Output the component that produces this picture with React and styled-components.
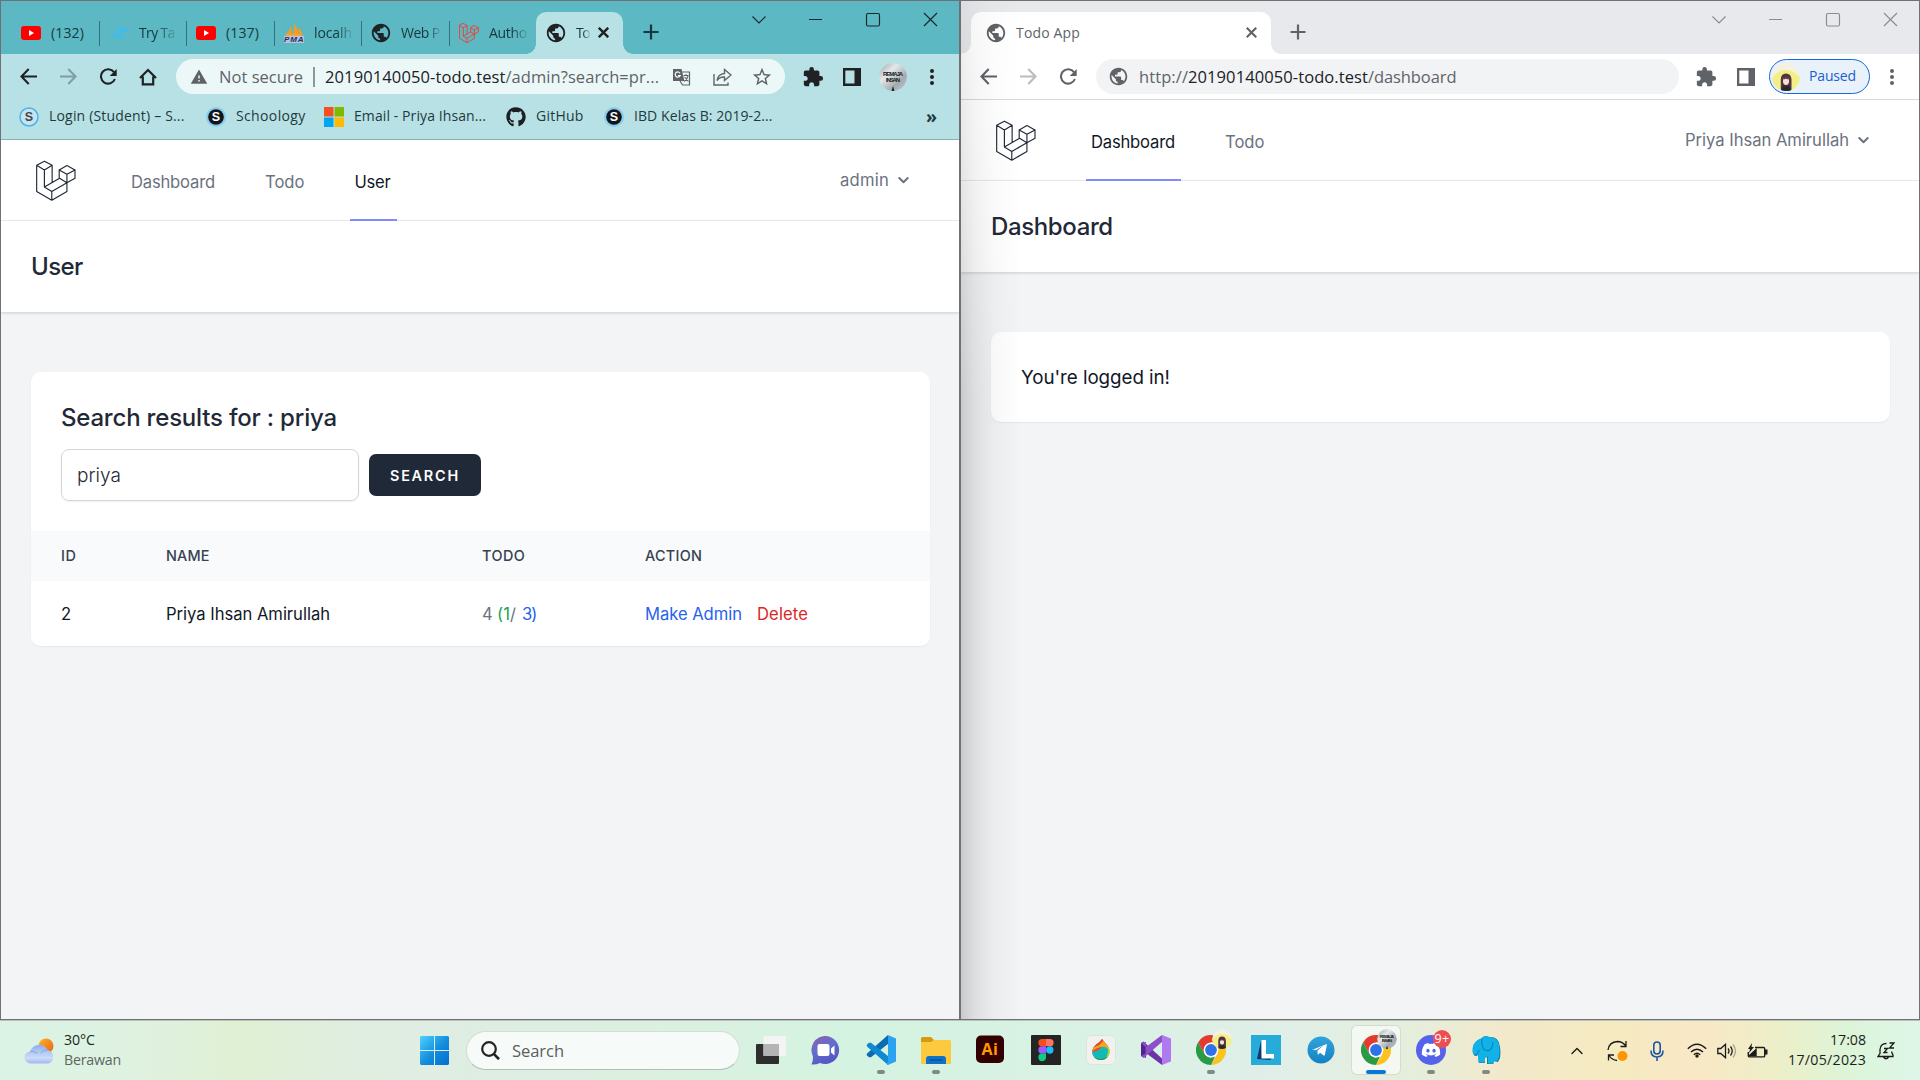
import React, { useLayoutEffect, useRef } from "react";
import styled, { createGlobalStyle, css } from "styled-components";
import { MdPublic, MdExtension, MdStarBorder, MdWarning } from "react-icons/md";
import { FaGithub, FaDiscord } from "react-icons/fa";

const UI = `"Open Sans", "Noto Sans", sans-serif`;
const APP = `Inter, "Open Sans", sans-serif`;

const Global = createGlobalStyle`
  *, *::before, *::after { box-sizing: border-box; }
  body { margin: 0; overflow: hidden; background: #f3f4f6; }
  svg { display: block; flex: none; }
`;

const Desktop = styled.div`
  width: 1920px;
  height: 1080px;
  display: grid;
  grid-template-columns: 960px 960px;
  grid-template-rows: 1020px 60px;
  overflow: hidden;
  font-family: ${UI};
`;

const Window = styled.section`
  position: relative;
  display: flex;
  flex-direction: column;
  border: 1px solid #707173;
  background: #f3f4f6;
  overflow: hidden;
`;

const Shade = styled.div`
  position: absolute;
  inset: 0 auto 0 0;
  width: 60px;
  pointer-events: none;
  background: linear-gradient(90deg, rgba(0, 0, 0, 0.17), rgba(0, 0, 0, 0.09) 22%, rgba(0, 0, 0, 0.03) 55%, transparent);
  mask-image: linear-gradient(180deg, rgba(0, 0, 0, 0.3), #000 400px);
`;

/* Text run spread over a given width by letter spacing */
const Run = styled.span`
  display: inline-block;
  flex: none;
  white-space: pre;
  color: ${(p) => p.$c || "inherit"};
  font-size: ${(p) => (p.$s ? `${p.$s}px` : "inherit")};
  font-weight: ${(p) => p.$b || "inherit"};
  margin-left: ${(p) => p.$ml || 0}px;
`;

function Fit({ w, s, c, b, ml, children }) {
  const ref = useRef(null);
  useLayoutEffect(() => {
    const el = ref.current;
    el.style.width = "auto";
    el.style.letterSpacing = "0px";
    const natural = el.getBoundingClientRect().width;
    const gaps = el.textContent.length - 0.5;
    el.style.letterSpacing = `${(w - natural) / gaps}px`;
    el.style.width = `${w}px`;
  }, [w]);
  return <Run ref={ref} $s={s} $c={c} $b={b} $ml={ml}>{children}</Run>;
}

/* ---------- browser chrome ---------- */

const TabStrip = styled.header`
  height: 53px;
  flex: none;
  display: flex;
  align-items: flex-start;
  background: ${(p) => p.$bg};
  color: ${(p) => p.$fg};
  font-size: 14px;
`;

const Tab = styled.div`
  height: 42px;
  margin-top: 11px;
  width: ${(p) => p.$w}px;
  padding-left: ${(p) => p.$pl}px;
  padding-bottom: 1px;
  flex: none;
  display: flex;
  align-items: center;
  position: relative;
  ${(p) =>
    p.$sep &&
    css`
      &::after {
        content: "";
        width: 1px;
        height: 25px;
        position: absolute;
        right: 0;
        top: 9px;
        background: #35727a;
      }
    `}
`;

const ActiveTab = styled(Tab)`
  background: ${(p) => p.$bg};
  border-radius: 10px 10px 0 0;
  margin-left: ${(p) => p.$ml || 0}px;
  &::before,
  &::after {
    content: "";
    position: absolute;
    bottom: 0;
    width: 10px;
    height: 10px;
  }
  &::before {
    left: -10px;
    background: radial-gradient(circle at 0 0, transparent 9.5px, ${(p) => p.$bg} 10px);
  }
  &::after {
    right: -10px;
    background: radial-gradient(circle at 100% 0, transparent 9.5px, ${(p) => p.$bg} 10px);
  }
`;

const TabIcon = styled.div`
  width: ${(p) => p.$w || 20}px;
  height: 20px;
  display: flex;
  align-items: center;
  justify-content: center;
  flex: none;
`;

const TabText = styled.div`
  margin-left: ${(p) => p.$ml || 10}px;
  width: ${(p) => p.$w}px;
  flex: none;
  white-space: nowrap;
  letter-spacing: -0.25px;
  ${(p) =>
    p.$fade &&
    css`
      mask-image: linear-gradient(90deg, #000 ${p.$fade}%, rgba(0, 0, 0, 0.12) 100%);
    `}
`;

const NewTab = styled.div`
  margin: 23px 0 0 ${(p) => p.$ml}px;
`;

const Controls = styled.div`
  margin-left: auto;
  padding: 10px 28px 0 0;
`;

const Toolbar = styled.div`
  height: ${(p) => p.$h}px;
  flex: none;
  display: flex;
  align-items: center;
  background: ${(p) => p.$bg};
  color: ${(p) => p.$fg};
  border-bottom: ${(p) => p.$line || "none"};
`;

const Slot = styled.div`
  width: ${(p) => p.$w}px;
  height: 30px;
  margin-left: ${(p) => p.$ml || 0}px;
  flex: none;
  display: flex;
  align-items: center;
  justify-content: center;
  color: ${(p) => p.$c || "inherit"};
`;

const Omnibox = styled.div`
  height: 35px;
  width: ${(p) => p.$w}px;
  margin-left: ${(p) => p.$ml}px;
  border-radius: 18px;
  background: ${(p) => p.$bg};
  color: #5f6368;
  flex: none;
  display: flex;
  align-items: center;
  font-size: 16.5px;
`;

const Bar = styled.i`
  width: 2px;
  height: 20px;
  margin-left: 10px;
  background: #8d9799;
`;

const Bookmarks = styled.div`
  height: 41px;
  flex: none;
  display: flex;
  align-items: center;
  padding: 0 0 5px 18px;
  background: #b7e1e4;
  border-bottom: 1px solid #8ab0b4;
  color: #1f3a3e;
  font-size: 14px;
`;

const Bookmark = styled.div`
  width: ${(p) => p.$w}px;
  height: 35px;
  display: flex;
  align-items: center;
  gap: 10px;
  flex: none;
  > span {
    padding-bottom: 2px;
  }
`;

const Avatar = styled.div`
  width: ${(p) => p.$d || 28}px;
  height: ${(p) => p.$d || 28}px;
  border-radius: 50%;
  overflow: hidden;
  flex: none;
`;

const Paused = styled.div`
  width: 101px;
  height: 35px;
  margin-left: 14px;
  padding-left: 2px;
  border: 1.5px solid #1a68d8;
  border-radius: 18px;
  background: #e9f1fb;
  color: #1a5fd0;
  font-size: 14px;
  display: flex;
  align-items: center;
  flex: none;
  > span {
    padding-bottom: 2px;
  }
`;

/* ---------- web app ---------- */

const Page = styled.div`
  flex: 1;
  background: #f3f4f6;
  font-family: ${APP};
  color: #111827;
`;

const Nav = styled.nav`
  height: 81px;
  display: flex;
  padding: 0 50px 0 35px;
  background: #fff;
  border-bottom: 1px solid #eeeff1;
`;

const LogoBox = styled.div`
  width: 40px;
  padding-top: 20px;
  margin-right: 50px;
`;

const NavLink = styled.a`
  height: 81px;
  padding: 5px 6px 0 5px;
  margin-right: 39px;
  display: flex;
  align-items: center;
  font-size: 16.6px;
  font-weight: 400;
  color: ${(p) => (p.$on ? "#111827" : "#6b7280")};
  border-bottom: 2px solid ${(p) => (p.$on ? "#818cf8" : "transparent")};
`;

const Account = styled.div`
  margin-left: auto;
  display: flex;
  align-items: center;
  gap: 9px;
  font-size: 16.6px;
  font-weight: 400;
  color: #6b7280;
`;

const PageHeader = styled.header`
  height: 91px;
  padding-left: 30px;
  display: flex;
  align-items: center;
  background: #fff;
  box-shadow: 0 1px 3px rgba(0, 0, 0, 0.16);
  font-size: 24px;
  font-weight: 520;
  color: #1f2937;
`;

const Card = styled.div`
  margin: ${(p) => p.$mt}px 29px 0 30px;
  height: ${(p) => p.$h}px;
  border-radius: 10px;
  background: #fff;
  box-shadow: 0 1px 2px rgba(0, 0, 0, 0.06);
  overflow: hidden;
`;

const Message = styled.div`
  height: 100%;
  padding-left: 30px;
  display: flex;
  align-items: center;
  font-size: 18.8px;
  font-weight: 380;
`;

const SearchArea = styled.div`
  height: 159px;
  padding: 30px 0 0 30px;
`;

const Title = styled.h2`
  margin: 0;
  height: 31px;
  line-height: 31px;
  font-size: 24px;
  font-weight: 520;
  color: #1f2937;
`;

const Form = styled.div`
  margin-top: 16px;
  display: flex;
  align-items: center;
  gap: 10px;
`;

const Field = styled.div`
  width: 298px;
  height: 52px;
  padding: 0 0 0 15px;
  border: 1px solid #d1d5db;
  border-radius: 8px;
  box-shadow: 0 1px 2px rgba(0, 0, 0, 0.05);
  display: flex;
  align-items: center;
  font-size: 19px;
  font-weight: 360;
  color: #1f2937;
`;

const Submit = styled.button`
  width: 112px;
  height: 42px;
  padding: 0 1px 0 0;
  border: 0;
  border-radius: 7px;
  background: #1f2937;
  color: #fff;
  font: 620 14.4px ${APP};
  display: flex;
  align-items: center;
  justify-content: center;
`;

const Row = styled.div`
  height: ${(p) => p.$h}px;
  padding: 0 0 ${(p) => (p.$head ? 2 : 0)}px 30px;
  display: grid;
  grid-template-columns: 105px 316px 163px 1fr;
  align-items: center;
  justify-items: start;
  background: ${(p) => (p.$head ? "#f9fafb" : "#fff")};
  font-size: ${(p) => (p.$head ? 14.4 : 16.6)}px;
  font-weight: ${(p) => (p.$head ? 480 : 380)};
  color: ${(p) => (p.$head ? "#374151" : "#111827")};
`;

/* ---------- taskbar ---------- */

const Taskbar = styled.footer`
  grid-column: 1 / 3;
  display: flex;
  border-top: 1px solid #b9c2b7;
  background: linear-gradient(90deg, #daf3e5 0, #dff2e2 120px, #e0f0d4 245px, #e0eee0 340px, #dfede3 440px, #dbf0e1 640px, #d5f3e1 850px, #d8f2e4 1050px, #e0efe8 1280px, #e6eedb 1420px, #f2e9cc 1500px, #f5eac0 1610px, #f9e8c6 1700px, #ecefc8 1780px, #dcf5d9 1850px, #def6e8 1920px);
`;

const Weather = styled.div`
  width: 420px;
  padding-left: 24px;
  display: flex;
  align-items: center;
  flex: none;
`;

const Lines = styled.div`
  margin-left: ${(p) => p.$ml || 0}px;
  padding-bottom: 2px;
  display: flex;
  flex-direction: column;
  align-items: ${(p) => (p.$right ? "flex-end" : "flex-start")};
  line-height: 20px;
  font-size: 14.2px;
  color: #1b1f1c;
`;

const Start = styled.div`
  width: 46px;
  padding-top: 15px;
  flex: none;
`;

const SearchPill = styled.div`
  width: 274px;
  height: 39px;
  margin-top: 10px;
  padding-left: 14px;
  border: 1px solid #d3ded5;
  border-bottom-color: #b3bdb5;
  border-radius: 20px;
  background: #f6faf8;
  display: flex;
  align-items: center;
  font-size: 16.5px;
  color: #5a605c;
  flex: none;
`;

const Apps = styled.div`
  margin-left: 3px;
  display: grid;
  grid-template-columns: repeat(14, 55px);
`;

const AppCell = styled.div`
  position: relative;
  height: 48px;
  width: 48px;
  margin: 5px 0 0 4px;
  border-radius: 5px;
  display: flex;
  align-items: center;
  justify-content: center;
  background: ${(p) => (p.$on ? "rgba(255,255,255,.6)" : "none")};
  box-shadow: ${(p) => (p.$on ? "0 0 0 1px rgba(160,170,160,.25)" : "none")};
  ${(p) =>
    p.$mark &&
    css`
      &::after {
        content: "";
        position: absolute;
        bottom: 0;
        left: ${p.$on ? 14 : 20}px;
        width: ${p.$on ? 20 : 8}px;
        height: 4px;
        border-radius: 2px;
        background: ${p.$on ? "#0a76d6" : "#7f8a82"};
      }
    `}
`;

const Badge = styled.div`
  position: absolute;
  right: ${(p) => p.$r}px;
  top: ${(p) => p.$t}px;
  width: ${(p) => p.$d}px;
  height: ${(p) => p.$d}px;
  border-radius: 50%;
  overflow: hidden;
  background: ${(p) => p.$bg || "none"};
  color: #fff;
  font-size: 12.5px;
  line-height: 16px;
  padding-bottom: 1px;
  display: flex;
  align-items: center;
  justify-content: center;
`;

const Tray = styled.div`
  margin-left: auto;
  display: flex;
  align-items: center;
  padding-right: 25px;
`;

const TrayItem = styled.div`
  width: ${(p) => p.$w}px;
  margin-left: ${(p) => p.$ml || 0}px;
  margin-right: ${(p) => p.$mr || 0}px;
  display: flex;
  justify-content: center;
`;

/* ---------- drawings ---------- */

const YouTube = () => (
  <svg width="20" height="14" viewBox="0 0 20 14">
    <rect width="20" height="14" rx="3" fill="#f00" />
    <path d="M8 4l5 3-5 3z" fill="#fff" />
  </svg>
);

const TailwindIcon = () => (
  <svg width="18" height="12" viewBox="0 0 18 12" fill="#38bdf8">
    <path d="M4.500 4.200Q5.700 .500 9 .500C12.500 .500 12.500 3 14.500 3Q16.200 3 18 .900Q16.600 5.500 13.500 5.500C10 5.500 10 2.700 8 2.700Q6.200 2.700 4.500 4.200z" />
    <path d="M0 10Q1.200 6.200 4.500 6.200C8 6.200 8 8.800 10 8.800Q11.700 8.800 13.500 6.700Q12.100 11.300 9 11.300C5.500 11.300 5.500 8.500 3.500 8.500Q1.700 8.500 0 10z" />
  </svg>
);

const PmaIcon = () => (
  <svg width="20" height="20" viewBox="0 0 20 20">
    <path d="M1 12Q6 8 7 2L8 12zM8.500 12Q11 6 10 0Q14 6 15 12zM15 12L14.500 4Q18 8 18.500 12z" fill="#f89c1c" />
    <path d="M1 11.500h18L17 14H3z" fill="#e5a95a" />
    <rect y="13" width="20" height="7" fill="#c5c9e0" opacity=".8" />
    <text x="0" y="19.300" textLength="19.500" fontFamily="Liberation Sans" fontWeight="700" fontStyle="italic" fontSize="8" fill="#2b2d63">PMA</text>
  </svg>
);

const LaravelLines = ({ w, h, c, sw }) => (
  <svg width={w} height={h} viewBox="0 0 119 121" fill="none" stroke={c} strokeWidth={sw} strokeLinejoin="round" strokeLinecap="round">
    <path d="M25 3L48 15 25 29 2 15zM2 15V93L47 119 92 93V67M25 29V80L47 93 92 67M47 93V119M48 15V66M25 80L70 54 92 67M92 16L116 29 92 42 69 29zM69 29V54M116 29V54L92 67M92 42V67" />
  </svg>
);

const Cross = ({ d = 10, sw = 2.2 }) => (
  <svg width={d} height={d} viewBox="0 0 10 10" stroke="currentColor" strokeWidth={sw} fill="none">
    <path d="M.7.700l8.600 8.600M9.300.700L.7 9.300" />
  </svg>
);

const Plus = () => (
  <svg width="16" height="16" viewBox="0 0 16 16" stroke="currentColor" strokeWidth="2.200">
    <path d="M8 .500v15M.5 8h15" />
  </svg>
);

const ControlIcons = styled.svg`
  overflow: visible;
`;

const WindowControls = ({ c }) => (
  <ControlIcons width="120" height="18" viewBox="0 0 120 18" fill="none" stroke={c} strokeWidth="1.150">
    <path d="M-58.500 5.500l6.500 6.500 6.500-6.500M-2 8.500h13" />
    <rect x="55.500" y="2.500" width="13" height="12.500" rx="1.500" />
    <path d="M113 2l13 13M126 2l-13 13" />
  </ControlIcons>
);

const Arrow = ({ flip }) => (
  <svg width="17" height="17" viewBox="0 0 17 17" fill="none" stroke="currentColor" strokeWidth="2.100" transform={flip ? "scale(-1 1)" : undefined}>
    <path d="M8.700 1L1.500 8.500 8.700 16M1.500 8.500H17" />
  </svg>
);

const Reload = () => (
  <svg width="19" height="18" viewBox="0 0 19 18" fill="none">
    <path d="M15 4.200A7.200 7.200 0 1 0 15.900 11" stroke="currentColor" strokeWidth="2.100" />
    <path d="M17.700 1v7h-7z" fill="currentColor" />
  </svg>
);

const Home = () => (
  <svg width="18" height="18" viewBox="0 0 18 18" fill="none" stroke="currentColor" strokeWidth="2.200">
    <path d="M1 10l8-8 8 8M3.800 8.500v7.900h10.400V8.500" />
  </svg>
);

const Translate = () => (
  <svg width="18" height="18" viewBox="0 0 18 18" fill="none">
    <path d="M8 4h8.500v13H9.500L7 13" stroke="#5f6368" strokeWidth="1.200" />
    <path d="M0 1h8.500l3 12H0z" fill="#5f6368" />
    <path d="M7 5.200A2.600 2.600 0 1 0 7.200 7.500H5" stroke="#fff" strokeWidth="1.200" />
    <path d="M10.500 7.500h5M13 6v1.500M15 8q-1 4-4 5.500M11.500 9l4 4.500" stroke="#5f6368" strokeWidth="1.100" />
  </svg>
);

const Share = () => (
  <svg width="19" height="18" viewBox="0 0 19 18" fill="none" stroke="#5f6368" strokeWidth="1.400">
    <path d="M1 6v11h14v-2.500M4 12.500Q5 6 11.500 5.500V1.500L18 7l-6.500 5.500V9Q7 8.500 4 12.500z" />
  </svg>
);

const Panel = () => (
  <svg width="18" height="18" viewBox="0 0 18 18">
    <path fillRule="evenodd" fill="currentColor" d="M0 0h18v18H0zM2.300 2.500v13h9.200v-13z" />
  </svg>
);

const Dots = () => (
  <svg width="4" height="18" viewBox="0 0 4 18" fill="currentColor">
    <circle cx="2" cy="3" r="2" /><circle cx="2" cy="9" r="2" /><circle cx="2" cy="15" r="2" />
  </svg>
);

const SIcon = ({ light }) => (
  <svg width="20" height="20" viewBox="0 0 20 20">
    <circle cx="10" cy="10" r={light ? 9 : 10} fill={light ? "#c8e3ee" : "#8acdf0"} stroke={light ? "#4ab4ea" : "none"} strokeWidth="1.500" />
    {!light && <circle cx="10" cy="10" r="7.800" fill="#10151a" />}
    <text x="10" y="14.400" textAnchor="middle" fontFamily="Liberation Sans" fontWeight="700" fontSize="12.500" fill={light ? "#40494f" : "#fff"}>S</text>
  </svg>
);

const FourSquares = () => (
  <svg width="20" height="20" viewBox="0 0 20 20">
    <path fill="#f25022" d="M0 0h9.500v9.500H0z" /><path fill="#7fba00" d="M10.500 0H20v9.500h-9.500z" />
    <path fill="#00a4ef" d="M0 10.500h9.500V20H0z" /><path fill="#ffb900" d="M10.500 10.500H20V20h-9.500z" />
  </svg>
);

const SilverFace = ({ d = 28 }) => (
  <svg width={d} height={d} viewBox="0 0 28 28">
    <defs>
      <linearGradient id="silver" x1="0" y1="0" x2="1" y2="1">
        <stop offset="0" stopColor="#9aa2a6" /><stop offset=".35" stopColor="#e4e8ea" /><stop offset=".7" stopColor="#a3abb0" /><stop offset="1" stopColor="#c6ccd0" />
      </linearGradient>
    </defs>
    <circle cx="14" cy="14" r="14" fill="url(#silver)" />
    <g fontFamily="Liberation Sans" fontWeight="700" fontSize="6" fill="#1b1d20">
      <text x="4" y="13" textLength="20">REMAJA</text>
      <text x="7" y="18.500" textLength="14">INSAN</text>
    </g>
    <path d="M12.500 28l1.500-5 1.500 5z" fill="#22252a" />
  </svg>
);

const GirlFace = ({ d = 28 }) => (
  <svg width={d} height={d} viewBox="0 0 28 28">
    <circle cx="14" cy="14" r="14" fill="#f4f1e0" />
    <path d="M0 15Q6 7 14 7t14 8A14 14 0 0 1 0 15z" fill="#f3ee86" />
    <path d="M8.800 28V16.500q0-6 5.200-6t5.500 6V28z" fill="#54353f" />
    <ellipse cx="14" cy="18.300" rx="3" ry="3.700" fill="#f4e2da" />
    <path d="M9.500 28q0-5 3.300-5.500l1.200 1 1.200-1Q18.800 23 19 28z" fill="#262832" />
    <path d="M11.700 16.800q2.300-2.300 4.600 0l-.6-2.600h-3.400z" fill="#54353f" />
  </svg>
);

const Caret = ({ w = 11, c = "currentColor", sw = 2, up }) => (
  <svg width={w} height="8" viewBox="0 0 11 8" fill="none" stroke={c} strokeWidth={sw} strokeLinecap="round" strokeLinejoin="round">
    <path d={up ? "M.5 6.500L5.500 1.500 10.500 6.500" : "M1.300 2l4.200 4.200L9.700 2"} />
  </svg>
);

const WeatherIcon = () => (
  <svg width="31" height="26" viewBox="0 0 31 26">
    <defs>
      <linearGradient id="sun" x1="0" y1="0" x2="1" y2="1"><stop stopColor="#f9b52a" /><stop offset="1" stopColor="#ee5f16" /></linearGradient>
      <linearGradient id="cloud" x1="0" y1="0" x2="0" y2="1"><stop stopColor="#8cb1ec" /><stop offset=".7" stopColor="#cddcf8" /><stop offset="1" stopColor="#9fb8ee" /></linearGradient>
    </defs>
    <circle cx="22" cy="8" r="7.500" fill="url(#sun)" />
    <path d="M7 25.500a6 6 0 0 1-1-12 9.500 9.500 0 0 1 17.500-1.500 7 7 0 0 1 1 13.500z" fill="url(#cloud)" />
    <path d="M6 13.500q4-1 7 2M23.500 12q-4-.500-7 3" stroke="#85a6e4" fill="none" />
  </svg>
);

const WindowsLogo = () => (
  <svg width="29" height="29" viewBox="0 0 29 29">
    <defs><linearGradient id="win" x1="0" y1="0" x2="1" y2="1"><stop stopColor="#4cd2fd" /><stop offset=".55" stopColor="#128bdd" /><stop offset="1" stopColor="#006fd0" /></linearGradient></defs>
    <path fill="url(#win)" d="M1 0h13v14H0V1zM15 0h13l1 1v13H15zM0 15h14v14H1l-1-1zM15 15h14v13l-1 1H15z" />
  </svg>
);

const Magnifier = () => (
  <svg width="19" height="19" viewBox="0 0 19 19" fill="none" stroke="#222" strokeWidth="2.200">
    <circle cx="8" cy="8" r="6.800" /><path d="M12.800 12.800L18 18.200" strokeWidth="2.600" />
  </svg>
);

const TaskView = () => (
  <svg width="30" height="28" viewBox="0 0 30 28">
    <rect x="0" y="8" width="23" height="20" rx="1" fill="#2d2e2d" />
    <rect x="7.500" y="0" width="22.500" height="20" rx="1" fill="#f4f4f4" />
    <path d="M7.500 8H23v12H7.500z" fill="#b4b4b4" />
  </svg>
);

const Chat = () => (
  <svg width="30" height="29" viewBox="0 0 30 29">
    <defs><linearGradient id="chat" x1=".2" y1="0" x2=".7" y2="1"><stop stopColor="#8a5fae" /><stop offset=".4" stopColor="#6370cc" /><stop offset="1" stopColor="#5450c4" /></linearGradient></defs>
    <path d="M15 0a14 14 0 1 1-6 27Q5 28.800.500 28.500 2.500 24 1.800 20A14 14 0 0 1 15 0z" fill="url(#chat)" />
    <rect x="6.500" y="8" width="12" height="12" rx="2" fill="#fff" /><path d="M20 12.500l3.500-3v10l-3.500-3z" fill="#fff" />
  </svg>
);

const VsCode = () => (
  <svg width="30" height="30" viewBox="0 0 30 30">
    <path d="M22 0L1 18.500q-1 1.500.500 2.500l1.500 1.300h2L22 9z" fill="#0b6cb4" />
    <path d="M22 30L1 11.500Q0 10 1.500 9L3 7.700h2L22 21z" fill="#0e8ad4" />
    <path d="M22 0l8 3.500v23L22 30l-1.500-1 1.500-3z" fill="#2ba3f0" />
  </svg>
);

const Folder = () => (
  <svg width="30" height="27" viewBox="0 0 30 27">
    <path d="M0 1.500Q0 0 1.500 0H10l3 3-2 4H0z" fill="#d89a0a" />
    <path d="M0 5h10l3-2h15.500Q30 3 30 4.500V27H0z" fill="#fdc93f" />
    <path d="M5 27v-5q0-3 3-3h14q3 0 3 3v5z" fill="#0f72c8" /><path d="M8.500 23h13" stroke="#0b4b8c" strokeWidth="1.300" />
  </svg>
);

const AiIcon = () => (
  <svg width="30" height="30" viewBox="0 0 30 30">
    <rect x="0" y=".5" width="28" height="27.500" rx="5" fill="#330000" />
    <text x="5.500" y="19.500" textLength="16.500" fontFamily="Open Sans" fontWeight="700" fontSize="16" fill="#ff9a00">Ai</text>
  </svg>
);

const FigmaIcon = () => (
  <svg width="30" height="30" viewBox="0 0 30 30">
    <rect width="30" height="30" rx="1" fill="#242424" />
    <path d="M11 4h4v7.300h-4a3.650 3.650 0 0 1 0-7.300z" fill="#f24e1e" /><path d="M15 4h4a3.650 3.650 0 0 1 0 7.300h-4z" fill="#ff7262" />
    <path d="M11 11.300h4v7.300h-4a3.650 3.650 0 0 1 0-7.300z" fill="#a259ff" /><circle cx="18.800" cy="15" r="3.700" fill="#1abcfe" />
    <path d="M11 18.600h4v3.700a3.800 3.800 0 1 1-4-3.700z" fill="#0acf83" />
  </svg>
);

const Drop = () => (
  <svg width="30" height="30" viewBox="0 0 30 30">
    <defs>
      <clipPath id="drop"><path d="M16 4q2 2.500 4.500 5.500 3.500 4 3 8a8.700 7.500 0 0 1-17.400 0q0-4.500 4-8 4-2.500 5.900-5.500z" /></clipPath>
    </defs>
    <rect x=".5" y=".5" width="29" height="29" rx="5" fill="#f1f1f0" stroke="#dfe3df" />
    <g clipPath="url(#drop)">
      <path d="M0 0h30v30H0z" fill="#13b9b4" /><path d="M4 17q9 0 13-7l8 2V0H4z" fill="#f2442c" /><path d="M8 12q6-1 9-6l7 4v7q-3-6-9-5t-9 5z" fill="#f7a51b" />
      <path d="M25 10v18H10q13-2 12-15z" fill="#c6cf2a" /><path d="M5 20q9 8 19 0v6H5z" fill="#2f8f3c" />
    </g>
  </svg>
);

const VisualStudio = () => (
  <svg width="30" height="30" viewBox="0 0 30 30">
    <path d="M0 8l2.500-1.500L22 24.500 21 30 5 18v5L0 21z" fill="#6d34a8" />
    <path d="M0 21l2.500 2L22 6 21 0 5 12V7L0 8z" fill="#8a4fc9" />
    <path d="M0 8l4.500 4v6.500L0 21z" fill="#50248a" /><path d="M21 0l9 3.500v23L21 30z" fill="#b179f1" />
  </svg>
);

const Chrome = () => (
  <svg width="30" height="30" viewBox="0 0 30 30">
    <path d="M2 7.500A15 15 0 0 1 28 7.500H15L8.500 18.700z" fill="#e33b2e" />
    <path d="M28 7.500A15 15 0 0 1 15 30l6.500-11.300L15 7.500z" fill="#fcc31e" />
    <path d="M15 30A15 15 0 0 1 2 7.500l6.500 11.200q3 4 6.500 3.800l4-1z" fill="#2b9a47" />
    <circle cx="15" cy="15" r="7.400" fill="#fff" /><circle cx="15" cy="15" r="5.900" fill="#2f72e8" />
  </svg>
);

const LIcon = () => (
  <svg width="30" height="30" viewBox="0 0 30 30">
    <rect width="30" height="30" fill="#27acd9" /><path d="M10 6L6 24l13 1 2-2H11z" fill="#11386b" />
    <path d="M10.500 5H15v14h8v4.500H10.500z" fill="#fff" />
  </svg>
);

const Telegram = () => (
  <svg width="28" height="28" viewBox="0 0 28 28">
    <defs><linearGradient id="tg" x1="0" y1="0" x2="0" y2="1"><stop stopColor="#31a4dc" /><stop offset="1" stopColor="#1482c4" /></linearGradient></defs>
    <circle cx="14" cy="14" r="13.500" fill="url(#tg)" />
    <path d="M5.500 13.700L19 8.200q1.200-.3.900.9L17.800 19q-.4.900-1.200.4l-3.500-2.600-1.800 1.700q-.5.400-.600-.400l-.300-3.300 6.300-5.600-8 5.100-3.100-.8q-.7-.300-.1-.800z" fill="#fff" />
  </svg>
);

const Discord = () => (
  <svg width="30" height="30" viewBox="0 0 30 30">
    <circle cx="15" cy="15" r="15" fill="#5562ea" />
    <FaDiscord x="5" y="5" width="20" height="20" size={20} color="#fff" />
  </svg>
);

const Elephant = () => (
  <svg width="29" height="30" viewBox="0 0 29 30">
    <path d="M1 18Q0 9 6 5 9 4 11 2q3-2 6 0 9-1 10.500 8 1.500 5 .5 13l-2 4-5-1v3h-6v-7l-2 1v5H7l-1-8q-2 2-4 0z" fill="#0c7fae" />
    <path d="M.5 17Q0 8 6 5q3-1 5-3 3-2 6 0 8 0 10 8 1 5 0 12l-2 4-3-.5v3h-6v-7l-3 1v5H6.500l-.5-8q-4 2-5.500-2.500z" fill="#12b1e8" />
    <path d="M10 4q-1 8 3 11 7 3 8-8M2 20q4 0 5-5" stroke="#0a85b8" strokeWidth="1.100" fill="none" />
  </svg>
);

const Sync = () => (
  <svg width="21" height="22" viewBox="0 0 21 22" fill="none" stroke="#1b1b1b" strokeWidth="1.300">
    <path d="M1 10Q2 2 10.500 1.500q5 0 8.500 4.500M19 1v5.500h-5.500M10 20.500Q5 20 2 15.500M1.500 20.500V15H7" />
    <circle cx="15.500" cy="16" r="5" fill="#ff9500" stroke="none" />
  </svg>
);

const Mic = () => (
  <svg width="14" height="20" viewBox="0 0 14 20" fill="none" stroke="#1a56a8" strokeWidth="1.600">
    <rect x="3.800" y="1" width="6.400" height="12" rx="3.200" /><path d="M1 9.500q0 6.500 6 6.500t6-6.500M7 16v4" />
  </svg>
);

const Wifi = () => (
  <svg width="20" height="15" viewBox="0 0 20 15" fill="none" stroke="#1b1b1b" strokeWidth="1.500">
    <path d="M.8 5.800q9.200-9 18.400 0M4 9q6-5.500 12 0M6.800 11.700q3.200-2.800 6.400 0" /><circle cx="10" cy="13" r="1.700" fill="#1b1b1b" stroke="none" />
  </svg>
);

const Volume = () => (
  <svg width="20" height="16" viewBox="0 0 20 16" fill="none" stroke="#1b1b1b" strokeWidth="1.300">
    <path d="M.8 5.500h3L8.500 1.300v13.400L3.800 10.500h-3zM11 5.500q2 2.500 0 5M13.500 3.500q3.500 4.500 0 9" /><path d="M16 1.500q5 6.500 0 13" stroke="#a9a38f" />
  </svg>
);

const Battery = () => (
  <svg width="21" height="16" viewBox="0 0 21 16" fill="none" stroke="#1b1b1b" strokeWidth="1.400">
    <path d="M8 4.500h8.500q1.200 0 1.200 1.200v7q0 1.200-1.200 1.200H3q-1.700 0-1.700-1.200V9" /><path d="M2.500 12.500L9 6.500v6z" fill="#1b1b1b" />
    <path d="M5 0L1 6h2l-1 4 5-6H4.500z" fill="#1b1b1b" stroke="none" /><path d="M18.200 7.200h1.600v3.600h-1.600z" fill="#1b1b1b" />
  </svg>
);

const Bell = () => (
  <svg width="18" height="18" viewBox="0 0 18 18" fill="none" stroke="#1b1b1b" strokeWidth="1.300">
    <path d="M9.500 1.500Q3.500 1.500 3 7.500v4l-2 3h15v-1.500l-1.200-2.500V9.500M6.500 15q2.500 3.500 5 0M7 6.500h3.500L7 10.500h3.500M12.500 1H17L12.500 6H17" />
  </svg>
);

/* ---------- composition ---------- */

function AppNav({ current, links, user, userWidth }) {
  return (
    <Nav>
      <LogoBox><LaravelLines w={40} h={41} c="#1f2937" sw={3.4} /></LogoBox>
      {links.map(([name, w]) => (
        <NavLink key={name} $on={name === current}><Fit w={w}>{name}</Fit></NavLink>
      ))}
      <Account><Fit w={userWidth}>{user}</Fit><Caret /></Account>
    </Nav>
  );
}

const LINKS = [["Dashboard", 84], ["Todo", 39.5]];

function LeftWindow() {
  return (
    <Window>
      <TabStrip $bg="#5cb8c2" $fg="#16383d">
        <Tab $w={99} $pl={20} $sep><TabIcon><YouTube /></TabIcon><TabText $w={36}><Fit w={33}>(132)</Fit></TabText></Tab>
        <Tab $w={87} $pl={10} $sep><TabIcon $w={19}><TailwindIcon /></TabIcon><TabText $w={37} $fade={45}><Fit w={36}>Try Ta</Fit></TabText></Tab>
        <Tab $w={88} $pl={9} $sep><TabIcon><YouTube /></TabIcon><TabText $w={36}><Fit w={33}>(137)</Fit></TabText></Tab>
        <Tab $w={87} $pl={9} $sep><TabIcon><PmaIcon /></TabIcon><TabText $w={38} $fade={60}><Fit w={38}>localh</Fit></TabText></Tab>
        <Tab $w={88} $pl={9} $sep><TabIcon><MdPublic size={22} color="#202124" /></TabIcon><TabText $w={39} $fade={70}><Fit w={39}>Web P</Fit></TabText></Tab>
        <Tab $w={86} $pl={9}><TabIcon><LaravelLines w={20} h={20} c="#e8483c" sw={6} /></TabIcon><TabText $w={38} $fade={60}><Fit w={38}>Autho</Fit></TabText></Tab>
        <ActiveTab $w={87} $pl={10} $bg="#b7e1e4">
          <TabIcon><MdPublic size={22} color="#202124" /></TabIcon><TabText $w={14} $fade={50}><Fit w={14}>To</Fit></TabText>
          <Slot $w={10} $ml={8} $c="#202124"><Cross d={11} /></Slot>
        </ActiveTab>
        <NewTab $ml={20}><Plus /></NewTab>
        <Controls><WindowControls c="#15292c" /></Controls>
      </TabStrip>
      <Toolbar $h={45} $bg="#b7e1e4" $fg="#202124">
        <Slot $w={17} $ml={19}><Arrow /></Slot>
        <Slot $w={17} $ml={23} $c="#7f9fa2"><Arrow flip /></Slot>
        <Slot $w={18} $ml={22}><Reload /></Slot>
        <Slot $w={18} $ml={22}><Home /></Slot>
        <Omnibox $w={609} $ml={19} $bg="#ecf8f8">
          <Slot $w={16} $ml={15}><MdWarning size={18} /></Slot>
          <Fit w={84} ml={12}>Not secure</Fit>
          <Bar />
          <Fit w={180.5} ml={10} c="#202124">20190140050-todo.test</Fit>
          <Fit w={153.5}>/admin?search=pr...</Fit>
          <Slot $w={18} $ml={14}><Translate /></Slot>
          <Slot $w={19} $ml={22}><Share /></Slot>
          <Slot $w={22} $ml={19}><MdStarBorder size={22} /></Slot>
        </Omnibox>
        <Slot $w={22} $ml={17}><MdExtension size={22} /></Slot>
        <Slot $w={18} $ml={19}><Panel /></Slot>
        <Slot $w={28} $ml={18}><Avatar><SilverFace /></Avatar></Slot>
        <Slot $w={4} $ml={23}><Dots /></Slot>
      </Toolbar>
      <Bookmarks>
        <Bookmark $w={187}><SIcon light /><Fit w={135.5}>Login (Student) – S...</Fit></Bookmark>
        <Bookmark $w={118}><SIcon /><Fit w={69.5}>Schoology</Fit></Bookmark>
        <Bookmark $w={182}><FourSquares /><Fit w={132}>Email - Priya Ihsan...</Fit></Bookmark>
        <Bookmark $w={98}><FaGithub size={20} color="#1b1f23" /><Fit w={47.5}>GitHub</Fit></Bookmark>
        <Bookmark $w={322}><SIcon /><Fit w={138.5}>IBD Kelas B: 2019-2...</Fit></Bookmark>
        <Bookmark $w={10}><Fit w={9} s={18} b={700}>»</Fit></Bookmark>
      </Bookmarks>
      <Page>
        <AppNav current="User" links={[...LINKS, ["User", 36]]} user="admin" userWidth={49} />
        <PageHeader><Fit w={52}>User</Fit></PageHeader>
        <Card $mt={60} $h={274}>
          <SearchArea>
            <Title><Fit w={276}>Search results for : priya</Fit></Title>
            <Form>
              <Field><Fit w={44}>priya</Fit></Field>
              <Submit><Fit w={69}>SEARCH</Fit></Submit>
            </Form>
          </SearchArea>
          <Row $h={50} $head>
            <Fit w={15}>ID</Fit><Fit w={43.5}>NAME</Fit><Fit w={43}>TODO</Fit><Fit w={57}>ACTION</Fit>
          </Row>
          <Row $h={65}>
            <Fit w={9}>2</Fit>
            <Fit w={164} b={400}>Priya Ihsan Amirullah</Fit>
            <div><Fit w={15} c="#6b7280">4 </Fit><Fit w={13} c="#16a34a">(1</Fit><Fit w={12} c="#6b7280">/ </Fit><Fit w={15} c="#2563eb">3)</Fit></div>
            <div><Fit w={97} c="#2563eb">Make Admin</Fit><Fit w={51} ml={15} c="#dc2626">Delete</Fit></div>
          </Row>
        </Card>
      </Page>
    </Window>
  );
}

function RightWindow() {
  return (
    <Window>
      <TabStrip $bg="#e8e9ed" $fg="#5f6368">
        <ActiveTab $w={300} $pl={15} $ml={10} $bg="#fff">
          <TabIcon><MdPublic size={22} /></TabIcon>
          <TabText $w={66}><Fit w={64}>Todo App</Fit></TabText>
          <Slot $w={11} $ml={164}><Cross d={11} sw={1.9} /></Slot>
        </ActiveTab>
        <NewTab $ml={19}><Plus /></NewTab>
        <Controls><WindowControls c="#8b8c8f" /></Controls>
      </TabStrip>
      <Toolbar $h={46} $bg="#fff" $fg="#5f6368" $line="1px solid #d8d9dc">
        <Slot $w={17} $ml={19}><Arrow /></Slot>
        <Slot $w={17} $ml={23} $c="#babcbe"><Arrow flip /></Slot>
        <Slot $w={18} $ml={22}><Reload /></Slot>
        <Omnibox $w={583} $ml={19} $bg="#f1f3f4">
          <Slot $w={20} $ml={12}><MdPublic size={21} /></Slot>
          <Fit w={49} ml={11}>http://</Fit>
          <Fit w={180} c="#202124">20190140050-todo.test</Fit>
          <Fit w={88.5}>/dashboard</Fit>
        </Omnibox>
        <Slot $w={22} $ml={16}><MdExtension size={22} /></Slot>
        <Slot $w={18} $ml={20}><Panel /></Slot>
        <Paused><Avatar><GirlFace /></Avatar><Fit w={47} ml={9}>Paused</Fit></Paused>
        <Slot $w={4} $ml={20}><Dots /></Slot>
      </Toolbar>
      <Page>
        <AppNav current="Dashboard" links={LINKS} user="Priya Ihsan Amirullah" userWidth={164} />
        <PageHeader><Fit w={122}>Dashboard</Fit></PageHeader>
        <Card $mt={60} $h={90}><Message><Fit w={149}>You're logged in!</Fit></Message></Card>
      </Page>
      <Shade />
    </Window>
  );
}

function Bottom() {
  return (
    <Taskbar>
      <Weather>
        <WeatherIcon />
        <Lines $ml={9}><Fit w={31}>30°C</Fit><Fit w={57} c="#5c665e">Berawan</Fit></Lines>
      </Weather>
      <Start><WindowsLogo /></Start>
      <SearchPill><Magnifier /><Fit w={52} ml={12}>Search</Fit></SearchPill>
      <Apps>
        <AppCell><TaskView /></AppCell>
        <AppCell><Chat /></AppCell>
        <AppCell $mark><VsCode /></AppCell>
        <AppCell $mark><Folder /></AppCell>
        <AppCell><AiIcon /></AppCell>
        <AppCell><FigmaIcon /></AppCell>
        <AppCell><Drop /></AppCell>
        <AppCell><VisualStudio /></AppCell>
        <AppCell $mark><Chrome /><Badge $r={3} $t={3} $d={20}><GirlFace d={20} /></Badge></AppCell>
        <AppCell><LIcon /></AppCell>
        <AppCell><Telegram /></AppCell>
        <AppCell $mark $on><Chrome /><Badge $r={3} $t={3} $d={20}><SilverFace d={20} /></Badge></AppCell>
        <AppCell $mark><Discord /><Badge $r={4} $t={4} $d={18} $bg="#ee4e52"><Fit w={15}>9+</Fit></Badge></AppCell>
        <AppCell $mark><Elephant /></AppCell>
      </Apps>
      <Tray>
        <TrayItem $w={14} $mr={23}><Caret w={14} up c="#1b1b1b" sw={1.4} /></TrayItem>
        <TrayItem $w={21} $mr={22}><Sync /></TrayItem>
        <TrayItem $w={14} $mr={23}><Mic /></TrayItem>
        <TrayItem $w={20} $mr={10}><Wifi /></TrayItem>
        <TrayItem $w={20} $mr={10}><Volume /></TrayItem>
        <TrayItem $w={21} $mr={20}><Battery /></TrayItem>
        <Lines $right><Fit w={36}>17:08</Fit><Fit w={78}>17/05/2023</Fit></Lines>
        <TrayItem $w={18} $ml={11}><Bell /></TrayItem>
      </Tray>
    </Taskbar>
  );
}

export default function App() {
  return (
    <Desktop>
      <Global />
      <LeftWindow />
      <RightWindow />
      <Bottom />
    </Desktop>
  );
}
